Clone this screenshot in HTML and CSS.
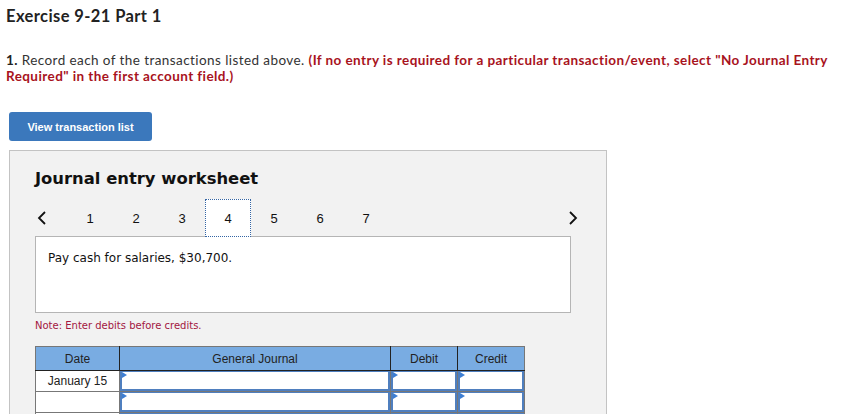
FILE: index.html
```html
<!DOCTYPE html>
<html>
<head>
<meta charset="utf-8">
<link rel="stylesheet" href="styles.css">
</head>
<body>
<h1 class="title">Exercise 9-21 Part 1</h1>
<p class="instr"><b class="num">1.</b> Record each of the transactions listed above. <b class="warn">(If no entry is required for a particular transaction/event, select "No Journal Entry Required" in the first account field.)</b></p>
<button class="btn">View transaction list</button>
<div class="panel">
  <h2 class="ws-title">Journal entry worksheet</h2>
  <div class="nav">
    <span class="arrow prev"><svg width="10" height="14" viewBox="0 0 10 14"><path d="M8 1 L2 7 L8 13" fill="none" stroke="#111" stroke-width="1.8"/></svg></span>
    <div class="tabs">
      <span class="tab">1</span>
      <span class="tab">2</span>
      <span class="tab">3</span>
      <span class="tab active">4</span>
      <span class="tab">5</span>
      <span class="tab">6</span>
      <span class="tab">7</span>
    </div>
    <span class="arrow next"><svg width="10" height="14" viewBox="0 0 10 14"><path d="M2 1 L8 7 L2 13" fill="none" stroke="#111" stroke-width="1.8"/></svg></span>
  </div>
  <div class="desc">Pay cash for salaries, $30,700.</div>
  <p class="note">Note: Enter debits before credits.</p>
  <table class="journal">
    <thead>
      <tr><th class="c-date">Date</th><th class="c-gj">General Journal</th><th class="c-amt">Debit</th><th class="c-amt">Credit</th></tr>
    </thead>
    <tbody>
      <tr><td class="date">January 15</td><td><div class="inp"></div></td><td><div class="inp"></div></td><td><div class="inp"></div></td></tr>
      <tr><td class="date"></td><td><div class="inp"></div></td><td><div class="inp"></div></td><td><div class="inp"></div></td></tr>
      <tr><td class="date"></td><td><div class="inp"></div></td><td><div class="inp"></div></td><td><div class="inp"></div></td></tr>
    </tbody>
  </table>
</div>
</body>
</html>
```
FILE: styles.css
```css
* { box-sizing: border-box; }
html, body { margin: 0; padding: 0; background: #fff; overflow: hidden; }
body { font-family: "Lato", "Open Sans", sans-serif; color: #222; width: 854px; height: 414px; }

.title {
  margin: 0;
  padding: 6px 0 0 6px;
  font-size: 16.5px;
  letter-spacing: 0.4px;
  font-weight: 700;
  line-height: 20px;
  color: #222;
}
.instr {
  margin: 26px 0 0 6px;
  width: 842px;
  font-size: 13.5px;
  letter-spacing: 0.42px;
  line-height: 16px;
  color: #333;
}
.instr .num { color: #222; }
.instr .warn { color: #a8131d; }

.btn {
  display: block;
  margin: 28px 0 0 9px;
  width: 143px;
  height: 29px;
  border: none;
  border-radius: 3px;
  background: #3b78bc;
  color: #fff;
  font-family: "Liberation Sans", Arial, sans-serif;
  font-weight: 700;
  font-size: 11px;
  padding: 0;
}

.panel {
  margin: 9px 0 0 9px;
  width: 598px;
  height: 300px;
  background: #f2f2f2;
  border: 1px solid #c3c3c3;
  padding: 18px 0 0 25px;
}
.ws-title {
  margin: 0;
  font-family: "DejaVu Sans", Verdana, sans-serif;
  font-size: 16.4px;
  font-weight: 700;
  line-height: 20px;
  color: #111;
}
.nav {
  display: flex;
  align-items: center;
  width: 543px;
  height: 38px;
  margin-top: 10px;
  position: relative;
  z-index: 1;
}
.arrow { display: flex; align-items: center; }
.prev { width: 32px; padding-left: 2px; }
.next { margin-left: auto; }
.tabs { display: flex; }
.tab {
  width: 46px;
  height: 38px;
  display: flex;
  align-items: center;
  justify-content: center;
  font-family: "Liberation Sans", Arial, sans-serif;
  font-size: 13px;
  color: #111;
}
.tab.active {
  background: #fff;
  border: 1px dotted #3465a4;
}
.desc {
  width: 536px;
  height: 77px;
  margin-top: -1px;
  background: #fff;
  border: 1px solid #b5b5b5;
  padding: 14px 0 0 12px;
  font-family: "DejaVu Sans", Verdana, sans-serif;
  font-size: 12px;
  color: #111;
}
.note {
  margin: 6px 0 0 0;
  font-family: "DejaVu Sans", Verdana, sans-serif;
  font-size: 10px;
  line-height: 14px;
  color: #a3163f;
}
.journal {
  margin-top: 13px;
  border-collapse: collapse;
  width: 489px;
  font-family: "Liberation Sans", Arial, sans-serif;
  font-size: 12px;
  border: 1px solid #777;
  table-layout: fixed;
}
.journal th {
  background: #79ace2;
  font-weight: 400;
  color: #222;
  height: 24px;
  border: 1px solid #777;
  border-bottom: 1px solid #222;
  border-right: 1px solid #222;
  padding: 0;
}
.journal th:last-child { border-right: 1px solid #777; }
.c-date { width: 84px; }
.c-gj { width: 271px; }
.c-amt { width: 67px; }
.journal td {
  border: 1px solid #777;
  padding: 0;
  height: 20px;
  background: #fff;
}
.journal td.date { text-align: center; color: #222; }
.inp {
  position: relative;
  height: 20px;
  border: 2px solid #4f7fbf;
  border-top-width: 1px;
  background: #fff;
}
.inp::before {
  content: "";
  position: absolute;
  left: 0;
  top: 0;
  border-left: 5px solid #3d7ed3;
  border-top: 3px solid transparent;
  border-bottom: 3px solid transparent;
}
```
